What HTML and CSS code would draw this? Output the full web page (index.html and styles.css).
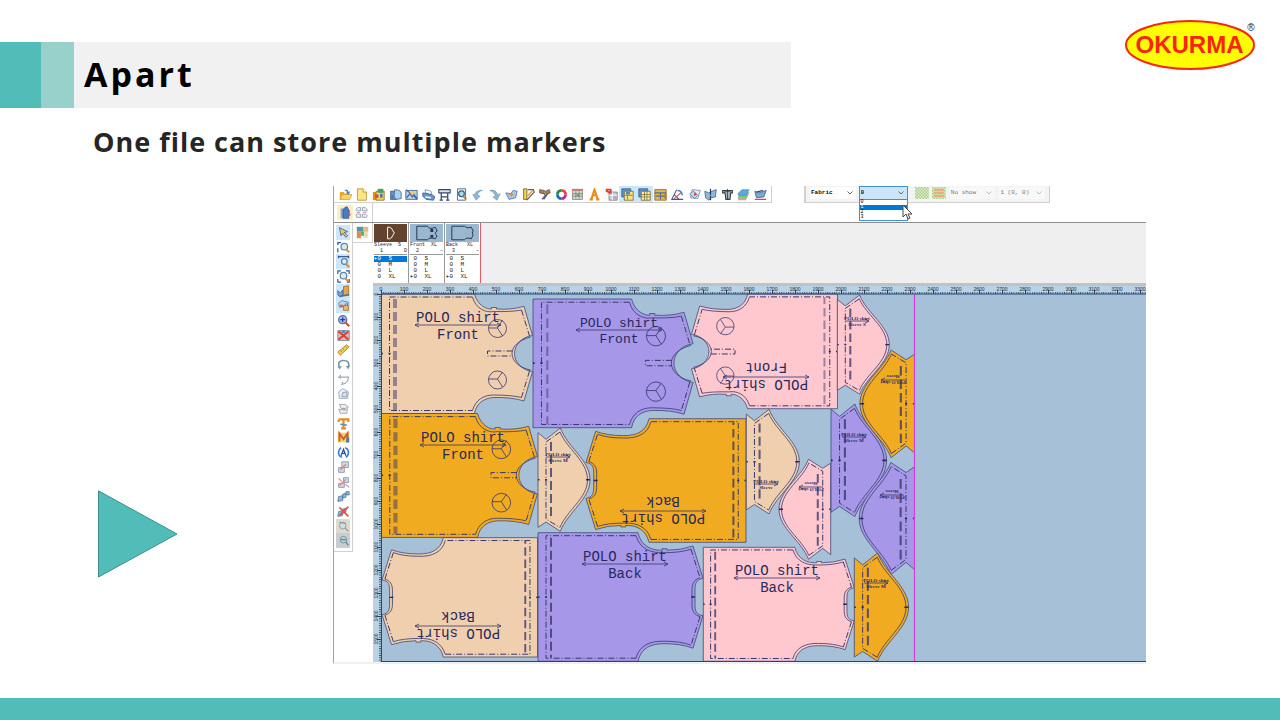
FILE: index.html
```html
<!DOCTYPE html>
<html lang="en">
<head>
<meta charset="utf-8">
<title>Apart</title>
<link rel="stylesheet" href="styles.css">
</head>
<body>
<header class="top">
  <div class="band">
    <span class="band-dark"></span><span class="band-light"></span>
    <h1 class="title">Apart</h1>
  </div>
  <svg class="logo" viewBox="0 0 132 50" role="img" aria-label="OKURMA">
    <ellipse cx="66" cy="25" rx="64" ry="24" fill="#ffff00" stroke="#fb2410" stroke-width="2"/>
    <text x="65.500" y="33" class="logo-name">OKURMA</text>
    <text x="127" y="11" class="logo-mark">®</text>
  </svg>
</header>
<h2 class="subtitle">One file can store multiple markers</h2>
<main class="content">
  <svg class="play" viewBox="0 0 80 88" aria-hidden="true"><path d="M.5 .8L79 44L.5 87Z" fill="#52bdb8" stroke="#3c8f8d"/></svg>
  <section class="app">
    <div class="bars">
      <div class="toolbar main-tools">
        <button aria-label="Open"><svg viewBox="0 0 16 16"><path d="M1 5h5l1 2h6v7H1z" fill="#e8a72e"/><path d="M1 14l3-6h12l-3 6z" fill="#ffd75c" stroke="#c98b20" stroke-width=".7"/><path d="M6 4q4-5 6 1l2-1-2 4-4-2 2-.5q-1-3-4-1.500" fill="#3f86cf"/></svg></button>
        <button aria-label="New"><svg viewBox="0 0 16 16"><path d="M3 1h7l4 4v10H3z" fill="#ffe680" stroke="#b28d38"/><path d="M10 1v4h4" fill="#fff" stroke="#b28d38"/></svg></button>
        <button aria-label="Open picture"><svg viewBox="0 0 16 16"><path d="M1 5h7v10H1z" fill="#d99622"/><path d="M5 4h10v11H5z" fill="#ffd24d" stroke="#7a6b34"/><path d="M7 1h7v5H7z" fill="#469e69"/><path d="M4 8h4v4H4z" fill="#d84b35"/><path d="M10 7h3v5h-3z" fill="#4175bd"/></svg></button>
        <button aria-label="Save"><svg viewBox="0 0 16 16"><path d="M2 4h7v10H2z" fill="#7393bd" stroke="#345581"/><path d="M7 2l6 1 2 3v7l-6 1-3-3z" fill="#a9d0ee" stroke="#3b6395"/><path d="M3 8l5 3-5 3z" fill="#487acb"/></svg></button>
        <button aria-label="Import"><svg viewBox="0 0 16 16"><path d="M1 3h14v11H1z" fill="#b7d4ea" stroke="#355e91"/><path d="M4 5h8v5H4z" fill="#f4c96a"/><path d="M2 12l4-5 3 4 2-3 4 5M1 2l5 4M15 14l-4-4" stroke="#356ac0" stroke-width="1.500" fill="none"/></svg></button>
        <button aria-label="Print"><svg viewBox="0 0 16 16"><path d="M4 2l7 2 1 5-8-3z" fill="#fff" stroke="#6887ae"/><path d="M1 6l11 2 4 3-2 4-9-1-4-4z" fill="#6297cb" stroke="#365b91"/><path d="M4 11l7 1" stroke="#fff" stroke-width="2"/></svg></button>
        <button aria-label="Plot"><svg viewBox="0 0 16 16"><path d="M1 2h14v4H1z" fill="#d9e7f4" stroke="#33466f" stroke-width="1.300"/><path d="M4 6v9M12 6v9M2 15h4M10 15h4M4 11h8" stroke="#33466f" stroke-width="1.500"/></svg></button>
        <button aria-label="Preview"><svg viewBox="0 0 16 16"><path d="M3 1h10v14H3z" fill="#f7f9fc" stroke="#36527b"/><circle cx="8" cy="7" r="3.500" fill="#a9dced" stroke="#345c8a" stroke-width="1.500"/><path d="M10 10l4 4" stroke="#b77f2c" stroke-width="2"/></svg></button>
        <button aria-label="Undo"><svg viewBox="0 0 16 16"><path d="M3 8q3-6 10-5-6 1-6 6l3 1-5 5-4-7z" fill="#8fb5da" stroke="#6088b5" stroke-width=".6"/></svg></button>
        <button aria-label="Redo"><svg viewBox="0 0 16 16"><path d="M2 3q7-2 10 5l3-1-4 8-5-4 3-1Q8 5 2 3z" fill="#8fb5c9" stroke="#5d93a7" stroke-width=".6"/></svg></button>
        <button aria-label="Piece"><svg viewBox="0 0 16 16"><path d="M1 6l6 1 3-4 5 1-2 8-8 2z" fill="#a8c7eb" stroke="#4773af"/><path d="M8 5l1 2 3 1-3 1-1 3-1-3-3-1 3-1z" fill="#ed8b2b"/></svg></button>
        <button aria-label="Measure"><svg viewBox="0 0 16 16"><path d="M2 1h4v13H2z" fill="#f8d551" stroke="#665229"/><path d="M7 2h7l1 3L6 15" fill="none" stroke="#695a5a" stroke-width="1.500"/><path d="M7 10l6-7" stroke="#e6a53b" stroke-width="2"/></svg></button>
        <button aria-label="Tools"><svg viewBox="0 0 16 16"><path d="M2 2l6 1-1 4-5-1zM9 4l5-2 1 4-5 2z" fill="#bd792f" stroke="#60584d"/><path d="M7 6l2 3-4 5M12 7l-5 7" stroke="#555e71" stroke-width="1.500" fill="none"/></svg></button>
        <button aria-label="Colors"><svg viewBox="0 0 16 16" fill="none" stroke-width="3.500"><path d="M8 3a5 5 0 0 1 5 5" stroke="#e7472d"/><path d="M13 8a5 5 0 0 1-5 5" stroke="#ba2ca1"/><path d="M8 13a5 5 0 0 1-5-5" stroke="#176eb2"/><path d="M3 8a5 5 0 0 1 5-5" stroke="#248b39"/></svg></button>
        <button aria-label="Table"><svg viewBox="0 0 16 16"><path d="M2 3h12v11H2z" fill="#d9e1cf" stroke="#777"/><path d="M2 7h12M2 10h12M6 4v9M10 4v9" stroke="#777"/><path d="M1 2h14" stroke="#e57265" stroke-width="2"/><path d="M7 8h3v2H7z" fill="#549957"/></svg></button>
        <button aria-label="Text"><svg viewBox="0 0 16 16"><path d="M2 14h4M10 14h4M4 14l4-12 4 12M5.500 9h5" fill="none" stroke="#ed8a16" stroke-width="2.500"/></svg></button>
        <button aria-label="Export table"><svg viewBox="0 0 16 16"><path d="M5 5h10v10H5z" fill="#bcd2dd" stroke="#777"/><path d="M5 9h10M9 5v10" stroke="#fff"/><path d="M1 2h6v5M1 3l5 3" stroke="#d94331" stroke-width="2.300" fill="none"/><path d="M10 10h4v4h-4z" fill="#c99bc8"/></svg></button>
        <button class="on" aria-label="Marker list" aria-pressed="true"><svg viewBox="0 0 16 16"><path d="M1 1h11v10H1z" fill="#6093cd" stroke="#325a8d"/><path d="M4 4h11v11H4z" fill="#ffe27b" stroke="#75663d"/><path d="M5 9h9M8 9v5" stroke="#7f703c"/><path d="M6 5h5v3H6z" fill="#4a87bc"/></svg></button>
        <button class="on" aria-label="Piece list" aria-pressed="true"><svg viewBox="0 0 16 16"><path d="M1 1h11v10H1z" fill="#6093cd" stroke="#325a8d"/><path d="M4 4h11v11H4z" fill="#fff0a3" stroke="#75663d"/><path d="M4 8h11M4 11h11M8 4v11M11 4v11" stroke="#87753c"/></svg></button>
        <button aria-label="Panels"><svg viewBox="0 0 16 16"><path d="M1 2h14v13H1z" fill="#eab648" stroke="#846629"/><path d="M1 6h14M8 6v8M2 10h12" stroke="#4d6f96" stroke-width="1.500"/><path d="M10 10l5-4v8z" fill="#b97b2c"/></svg></button>
        <button aria-label="Angle"><svg viewBox="0 0 16 16" fill="none"><path d="M7 2L1 14h14M4 8l6 6" stroke="#385a92" stroke-width="1.300"/><path d="M4 13L13 5" stroke="#d14d50" stroke-width="1.300"/><path d="M8 3q5 0 6 6" stroke="#4c84b8" stroke-width="1.800"/></svg></button>
        <button aria-label="Flip"><svg viewBox="0 0 16 16"><path d="M5 2l10 1-3 10-9-1z" fill="#e9edf5" stroke="#7782a4"/><path d="M2 7l5-3 5 5-4 4z" fill="#cbdcf0" stroke="#5277ab"/><path d="M8 5l3 3-4 2z" fill="#d64242"/></svg></button>
        <button aria-label="Mirror"><svg viewBox="0 0 16 16"><path d="M1 4l5 2 4-2 5-2-1 9-5 1-3 3-4-3z" fill="#8db8df" stroke="#3a669a"/><path d="M8 1v14" stroke="#273b59" stroke-width="1.500"/><path d="M4 9h8" stroke="#dfb34c"/></svg></button>
        <button aria-label="Delete piece"><svg viewBox="0 0 16 16"><path d="M2 3h12v3h-2l-1 8H6L5 6H2z" fill="#a9b6bd" stroke="#343e49" stroke-width="1.300"/><path d="M8 1v13M4 4h8" stroke="#343e49"/></svg></button>
        <button aria-label="Layers"><svg viewBox="0 0 16 16"><path d="M1 13l5-6h9l-4 8H2z" fill="#f290b2"/><path d="M1 10l5-5h9l-4 8H2z" fill="#75d16f"/><path d="M1 7l5-5h9l-4 7H2z" fill="#5ba6e7" stroke="#327bbd" stroke-width=".6"/></svg></button>
        <button aria-label="Cut"><svg viewBox="0 0 16 16"><path d="M1 4l5 2 9-3-3 8-9 1z" fill="#7aa9d1" stroke="#3b658c"/><path d="M3 5l8-2" stroke="#35516f" stroke-width="1.500"/><path d="M1 14h14" stroke="#ed3f3f" stroke-width="1.500"/></svg></button>
      </div>
      <div class="toolbar fabric-tools">
        <span class="pick pick-a"><select aria-label="Fabric"><option>Fabric</option></select><svg viewBox="0 0 6 4"><path d="M.5 .5L3 3L5.500 .5"/></svg></span>
        <span class="pick pick-b open"><select aria-label="Marker"><option>0</option></select><svg viewBox="0 0 6 4"><path d="M.5 .5L3 3L5.500 .5"/></svg>
          <span class="menu"><span>0</span><span class="sel">1</span><span>2</span><span>3</span>
            <svg class="cursor" viewBox="0 0 10 16"><path d="M1 1v12l3-3 2 5 2-1-2-4h4z" fill="#fff" stroke="#444"/></svg></span>
        </span>
        <svg class="swatch" viewBox="0 0 14 12"><rect width="14" height="12" fill="url(#greenCheck)"/></svg>
        <svg class="swatch" viewBox="0 0 14 12"><rect width="14" height="12" fill="url(#greenCheck)"/><path d="M2 3h10M2 6h10M2 9h10" stroke="#f2a16f" stroke-width="1.500"/></svg>
        <span class="pick pick-c off"><select aria-label="Show" disabled><option>No show</option></select><svg viewBox="0 0 6 4"><path d="M.5 .5L3 3L5.500 .5"/></svg></span>
        <span class="pick pick-d off"><select aria-label="Offset" disabled><option>1 (0, 0)</option></select><svg viewBox="0 0 6 4"><path d="M.5 .5L3 3L5.500 .5"/></svg></span>
      </div>
    </div>
    <div class="subbar">
      <div class="toolbar group-tools">
        <button class="warm" aria-label="Body"><svg viewBox="0 0 16 16"><path d="M2 3h5v12H2z" fill="#80a9d0"/><path d="M7 2l3-1 2 4v10H5V5z" fill="#437fc3" stroke="#2c5b98"/><path d="M13 5v6M12 10l1 2 2-2" stroke="#dc4d3e" fill="none"/></svg></button>
        <button aria-label="Group"><svg viewBox="0 0 16 16" fill="#e8edf2" stroke="#8798ab"><path d="M1 5q1-4 6-3v4H2zM9 2q5-1 6 3v1H9zM1 11q1-2 6-1v4H2zM9 10q5-1 6 2l-1 2H9z"/><path d="M2 8h4M10 8h4" stroke="#e28080"/></svg></button>
      </div>
    </div>
    <div class="body">
      <div class="side">
        <div class="tools">
          <button class="on" aria-label="Select"><svg viewBox="0 0 16 16"><path d="M3 2l2 10 2-3 4 5 2-2-4-4 4-1z" fill="#f6c652" stroke="#31568a"/></svg></button>
          <button aria-label="Zoom area"><svg viewBox="0 0 16 16"><path d="M1 5V2h4M1 9v5" stroke="#355b95" stroke-width="1.500" fill="none"/><circle cx="9" cy="7" r="4" fill="#d7edf4" stroke="#5d83ab" stroke-width="1.500"/><path d="M11 10l4 4" stroke="#d58a45" stroke-width="2.500"/></svg></button>
          <button class="on" aria-label="Zoom width"><svg viewBox="0 0 16 16"><path d="M1 2h14M2 1v3M14 1v3" stroke="#355b95" stroke-width="1.500"/><circle cx="9" cy="8" r="3.500" fill="#d7edf4" stroke="#5d83ab" stroke-width="1.500"/><path d="M11 11l4 4" stroke="#d58a45" stroke-width="2.500"/></svg></button>
          <button aria-label="Zoom all"><svg viewBox="0 0 16 16"><path d="M1 5V1h4M11 1h4v4M1 11v4h4M15 11v4h-3" stroke="#355b95" stroke-width="1.500" fill="none"/><circle cx="8" cy="7" r="4" fill="#d7edf4" stroke="#5d83ab" stroke-width="1.500"/><path d="M10 10l4 4" stroke="#d58a45" stroke-width="2.500"/></svg></button>
          <button class="on" aria-label="Hold"><svg viewBox="0 0 16 16"><path d="M1 7l3 3 3-4v7q-4 3-6-1z" fill="#78a9df" stroke="#365f96"/><path d="M8 2l6-1v11l-6 1z" fill="#eea34b" stroke="#a76928"/><path d="M3 14l12-2" stroke="#4472ab" stroke-width="2"/></svg></button>
          <button class="on" aria-label="Lock"><svg viewBox="0 0 16 16"><path d="M2 5l4-3 8 2-1 5-10 1z" fill="#bdd8ee" stroke="#4e7cae"/><path d="M4 7h3v3H4z" fill="#e04b3e"/><path d="M8 8h6v6H8z" fill="#e9b765" stroke="#a0762d"/><path d="M10 8V6h3v2" fill="none" stroke="#5d77a0"/></svg></button>
          <button aria-label="Zoom in"><svg viewBox="0 0 16 16"><circle cx="7" cy="7" r="5" fill="#a9bde8" stroke="#5066a6" stroke-width="1.500"/><path d="M4 7h6M7 4v6" stroke="#273c92" stroke-width="1.500"/><path d="M10 10l5 5" stroke="#ba503d" stroke-width="2.500"/></svg></button>
          <button aria-label="Remove"><svg viewBox="0 0 16 16"><path d="M1 2h14v12H1z" fill="#dac3bd" stroke="#697894"/><path d="M2 3l12 10M14 3L2 13" stroke="#e63b26" stroke-width="2.500"/><path d="M6 2h4v3H6z" fill="#5189bd"/></svg></button>
          <button aria-label="Ruler"><svg viewBox="0 0 16 16"><path d="M1 11L12 2l3 3L4 15z" fill="#f3cf4e" stroke="#a77b22"/><path d="M4 9l2 2M7 7l2 2M10 4l2 2" stroke="#a77b22"/></svg></button>
          <button aria-label="Rotate"><svg viewBox="0 0 16 16"><path d="M3 12Q0 3 8 3t6 8" fill="none" stroke="#719aa2" stroke-width="2"/><path d="M1 10l2 4 3-4M11 10l3 4 2-5" fill="#719aa2"/></svg></button>
          <button class="dim" aria-label="Split"><svg viewBox="0 0 16 16"><path d="M1 5h14M4 2v5M14 5q0 8-8 9l1-3" fill="none" stroke="#8295ab" stroke-width="1.400"/></svg></button>
          <button class="dim" aria-label="Copy piece"><svg viewBox="0 0 16 16"><path d="M2 6l5-4 7 4-1 8H3z" fill="#e7edf2" stroke="#7588a1"/><path d="M7 7l5-1v6H6z" fill="#d4dbe4" stroke="#627a9a"/></svg></button>
          <button class="dim" aria-label="Paste piece"><svg viewBox="0 0 16 16"><path d="M3 3h7l4 3-4 2H5zM2 9l8 1 3-2-1 6H4z" fill="#e4e7ec" stroke="#798999"/><path d="M7 8l3 1" stroke="#cb7272" stroke-width="2"/></svg></button>
          <button aria-label="Text tool"><svg viewBox="0 0 16 16"><path d="M2 3h12v3M2 3v3M8 3v11M5 14h6" fill="none" stroke="#e68a26" stroke-width="2.700"/><path d="M4 9l8 1" stroke="#5098b8" stroke-width="2"/></svg></button>
          <button aria-label="Mark tool"><svg viewBox="0 0 16 16"><path d="M1 2h14v12H1z" fill="#ffd45d"/><path d="M3 13V3l5 7 5-7v10" fill="none" stroke="#ca6137" stroke-width="2.500"/><path d="M12 8h3v6h-4z" fill="#477caa"/></svg></button>
          <button aria-label="Turn"><svg viewBox="0 0 16 16"><path d="M5 2Q0 6 3 12l3 2M11 14q5-4 2-10l-3-2" fill="none" stroke="#367bd3" stroke-width="2"/><path d="M5 12l3-8 3 8M6 9h4" stroke="#274d99" stroke-width="1.500" fill="none"/></svg></button>
          <button class="dim" aria-label="Join"><svg viewBox="0 0 16 16"><path d="M6 1h8v7H6zM2 8h7v6H2z" fill="#c9d1df" stroke="#61789e"/><path d="M4 11l7-7" stroke="#d86d60" stroke-width="2"/></svg></button>
          <button class="dim" aria-label="Unjoin"><svg viewBox="0 0 16 16"><path d="M8 2h6v6H8zM2 9h7v5H2z" fill="#c9d1df" stroke="#61789e"/><path d="M2 3l4 4M10 10l5 4M3 12l8-8" stroke="#d86d60" stroke-width="1.500"/></svg></button>
          <button aria-label="Link"><svg viewBox="0 0 16 16"><path d="M2 8l5-1v6l-6 1zM7 5l4-1v5l-4 1zM11 2h4v4h-4z" fill="#8fb8d2" stroke="#527a9e"/></svg></button>
          <button aria-label="Unlink"><svg viewBox="0 0 16 16"><path d="M2 8l5-1v6l-6 1zM7 5l4-1v5l-4 1z" fill="#8fb8d2" stroke="#527a9e"/><path d="M3 3l11 11M14 2L3 13" stroke="#e64c49" stroke-width="2"/></svg></button>
          <button class="sand" aria-label="Find"><svg viewBox="0 0 16 16"><circle cx="7" cy="7" r="4" fill="#d5dce2" stroke="#8796a2"/><path d="M10 10l4 4M3 3l8 1" stroke="#8796a2" stroke-width="1.500"/></svg></button>
          <button class="gray" aria-label="Inspect"><svg viewBox="0 0 16 16"><circle cx="8" cy="7" r="4" fill="#b9d5d7" stroke="#69838c"/><path d="M11 10l3 4M5 7h6" stroke="#69838c" stroke-width="1.500"/></svg></button>
        </div>
        <div class="tools palette">
          <button aria-label="Palette"><svg viewBox="0 0 16 16"><path d="M1 1h14v14H1z" fill="#efeadd"/><path d="M1 1h8v6H1z" fill="#4b9ba6"/><path d="M9 1h6v6H9z" fill="#e8b878"/><path d="M1 7h5v8H1z" fill="#e08a54"/><path d="M6 7h4v5H6z" fill="#66af5e"/><path d="M11 8h3v6h-3z" fill="#e9d9a0"/></svg></button>
        </div>
      </div>
      <div class="work">
        <div class="pieces">
          <article class="piece">
            <svg class="thumb brown" viewBox="0 0 34 18"><path d="M14 3h2q3 1 3 3l2 3-2 3q0 2-3 3h-2z" fill="none" stroke="#fff"/></svg>
            <div class="name"><span>Sleeve</span><span class="size">S</span><span>&nbsp; 1</span><span>D</span></div>
            <ul><li class="sel">▸0&nbsp; S</li><li>&nbsp;0&nbsp; M</li><li>&nbsp;0&nbsp; L</li><li>&nbsp;0&nbsp; XL</li></ul>
          </article>
          <article class="piece">
            <svg class="thumb" viewBox="0 0 34 18"><path d="M7 2h11q2 4 8 1l2 4q-4 2 0 5l-2 3q-6-2-8 1H7z" fill="none" stroke="#26374a"/><path d="M21 5h3v3h-3zM21 11h3v3h-3z" fill="#26374a"/></svg>
            <div class="name"><span>Front</span><span class="size">XL</span><span>&nbsp; 2</span><span>–</span></div>
            <ul><li>&nbsp;0&nbsp; S</li><li>&nbsp;0&nbsp; M</li><li>&nbsp;0&nbsp; L</li><li>▸0&nbsp; XL</li></ul>
          </article>
          <article class="piece">
            <svg class="thumb" viewBox="0 0 34 18"><path d="M6 2h13q3 3 7 1l2 4q-2 2 0 4l-2 4q-5-2-7 1H6z" fill="none" stroke="#26374a"/></svg>
            <div class="name"><span>Back</span><span class="size">XL</span><span>&nbsp; 3</span><span>–</span></div>
            <ul><li>&nbsp;0&nbsp; S</li><li>&nbsp;0&nbsp; M</li><li>&nbsp;0&nbsp; L</li><li>▸0&nbsp; XL</li></ul>
          </article>
        </div>
        <svg class="canvas" viewBox="373 286 773 376">
          <defs>
            <pattern id="greenCheck" width="3" height="3" patternUnits="userSpaceOnUse"><rect width="3" height="3" fill="#f3efb4"/><path d="M0 0h1.500v1.500H0zM1.500 1.500H3V3H1.500z" fill="#93cda0"/></pattern>
            <pattern id="tickX" x="381" y="286" width="2.300" height="8" patternUnits="userSpaceOnUse"><path d="M.5 6v2" stroke="#405567" stroke-width=".9"/></pattern>
            <pattern id="tickY" x="373" y="294" width="8" height="2.300" patternUnits="userSpaceOnUse"><path d="M6 .5h2" stroke="#405567" stroke-width=".9"/></pattern>
            <g id="frontPiece">
              <path class="cut" d="M0 0H93C96 12 106 15.500 110 15V13.500H115V15Q130 16 142.500 12.300L151 41.500C140 43 133 51 133 59.500S140 76 151 77.500L142.500 107Q130 103 112 103.500C104 104 95 108 93 119.500H0Z"/>
              <path class="line" d="M91 3C94 15 105 19 112 17.500Q130 18 140 16M149 43C138 46 130.500 52 130.500 59.500S138 74 149 76M140 103.500Q130 101 112 101C102 101 94 106 91 116.500"/>
              <path class="seam" d="M91 3H8V116.500H91"/>
              <path class="seam" d="M140 16L148 42M148 77L140 103.500"/>
              <path class="hem" d="M13.500 5V116"/>
              <path class="seam" d="M131 57H106V62H131"/>
              <g class="line"><circle cx="116" cy="34.500" r="9"/><path d="M107 34H116L121 26M116 34L121 42"/><circle cx="116" cy="86" r="9"/><path d="M107 85H116L121 78M116 85L121 93"/></g>
              <path class="notch" d="M0 59.500H1.500M7 59.500H9"/>
            </g>
            <g id="backPiece">
              <path class="cut" d="M0 0H100C103 13 113 18 124 17.500V16H129V17.500Q143 17.500 155 13.300L165 45.600C158 47 157 51 157 57V72C157 78 158 82 165 83L155 115.500Q143 111 126 111C113 111 103 115 100 128.600H0Z"/>
              <path class="line" d="M98 3C102 16 112 20.500 126 20Q143 20 153 16.500M162 45C156 47 154 51 154 57V72C154 78 156 82 162 84M153 112.500Q143 108.500 126 108.500C112 108 101 113 98 125.500"/>
              <path class="seam" d="M98 3H8V125.500H98"/>
              <path class="seam" d="M153 16.500L162 45M162 84L153 112.500"/>
              <path class="hem thin" d="M13 5V125"/>
              <path class="notch" d="M0 64.300H1.500M7 64.300H9M153 64.300H157"/>
            </g>
            <g id="sleevePiece">
              <path class="cut" d="M0 4.700L8 11.300L22.300 0C30 20 52 32 52 51.700S30 84 22.300 103.300L8 94L0 99.300Z"/>
              <path class="line" d="M22 4C29 21 49.500 33 49.500 51.700S29 82 22 99.500"/>
              <path class="seam" d="M22 4L8 14V91L22 99.500"/>
              <path class="hem thin" d="M13 14V91"/>
              <path class="notch" d="M0 51.700H1.500M7 51.700H9M48 51.700H52"/>
            </g>
            <path id="grain" class="line" d="M-43 0H43M-39-2L-43 0L-39 2M39-2L43 0L39 2"/>
            <path id="shortGrain" class="line" d="M-12 0H12M8-2L12 0L8 2"/>
          </defs>
          <rect x="373" y="286" width="773" height="376" fill="#b9d2e4"/>
          <rect x="381" y="294" width="765" height="368" fill="#a6c0d8"/>
          <rect x="381" y="286" width="765" height="8" fill="url(#tickX)"/>
          <rect x="373" y="294" width="8" height="368" fill="url(#tickY)"/>
          <g id="rulerX" class="ruler"></g>
          <g id="rulerY" class="ruler"></g>

          <g class="peach"><use href="#frontPiece" transform="translate(381.500 294)"/></g>
          <g class="violet narrow"><use href="#frontPiece" transform="translate(533 299) scale(1.060 1.077)"/></g>
          <g class="pink narrow"><use href="#frontPiece" transform="translate(837.500 408.700) scale(-.967 -.960)"/></g>
          <g class="amber"><use href="#frontPiece" transform="translate(381.500 413.500) scale(1.033 1.037)"/></g>
          <g class="peach"><use href="#backPiece" transform="translate(537.500 657) scale(-.942 -.928)"/></g>
          <g class="amber"><use href="#backPiece" transform="translate(746 542.300) scale(-.970 -.961)"/></g>
          <g class="violet"><use href="#backPiece" transform="translate(538 532.700)"/></g>
          <g class="pink"><use href="#backPiece" transform="translate(703.300 547.300) scale(.915 .886)"/></g>
          <g class="peach"><use href="#sleevePiece" transform="translate(538 428)"/></g>
          <g class="pink"><use href="#sleevePiece" transform="translate(837.300 295) scale(1 .960)"/></g>
          <g class="peach"><use href="#sleevePiece" transform="translate(746.300 409.300) scale(1.020 1.013)"/></g>
          <g class="pink"><use href="#sleevePiece" transform="translate(830.700 559.300) scale(-.994 -.968)"/></g>
          <g class="violet"><use href="#sleevePiece" transform="translate(831 404) scale(1.070 1.090)"/></g>
          <g class="amber"><use href="#sleevePiece" transform="translate(914.500 457.700) scale(-1.050 -1.042)"/></g>
          <g class="violet"><use href="#sleevePiece" transform="translate(914.500 574.700) scale(-1.064 -1.087)"/></g>
          <g class="amber"><use href="#sleevePiece" transform="translate(854.300 553) scale(1.044 1.048)"/></g>

          <g transform="translate(458 325)"><use href="#grain"/><text y="-3">POLO shirt</text><text y="14">Front</text></g>
          <g class="small" transform="translate(619 330)"><use href="#grain"/><text y="-3">POLO shirt</text><text y="13">Front</text></g>
          <g transform="translate(766 377) rotate(180)"><use href="#grain"/><text y="-3">POLO shirt</text><text y="14">Front</text></g>
          <g transform="translate(463 445)"><use href="#grain"/><text y="-3">POLO shirt</text><text y="14">Front</text></g>
          <g transform="translate(458 626) rotate(180)"><use href="#grain"/><text y="-3">POLO shirt</text><text y="14">Back</text></g>
          <g transform="translate(663 511) rotate(180)"><use href="#grain"/><text y="-3">POLO shirt</text><text y="14">Back</text></g>
          <g transform="translate(625 564)"><use href="#grain"/><text y="-3">POLO shirt</text><text y="14">Back</text></g>
          <g transform="translate(777 578)"><use href="#grain"/><text y="-3">POLO shirt</text><text y="14">Back</text></g>
          <g class="tiny" transform="translate(558 457)"><use href="#shortGrain"/><text y="-1">POLO shirt</text><text y="5">Sleeve M</text></g>
          <g class="tiny" transform="translate(857 321)"><use href="#shortGrain"/><text y="-1">POLO shirt</text><text y="5">Sleeve S</text></g>
          <g class="tiny" transform="translate(766 484)"><use href="#shortGrain"/><text y="-1">POLO shirt</text><text y="5">Sleeve</text></g>
          <g class="tiny" transform="translate(854 437)"><use href="#shortGrain"/><text y="-1">POLO shirt</text><text y="5">Sleeve M</text></g>
          <g class="tiny" transform="translate(876 583)"><use href="#shortGrain"/><text y="-1">POLO shirt</text><text y="5">Sleeve M</text></g>
          <g class="tiny" transform="translate(893 380) rotate(180)"><use href="#shortGrain"/><text y="-1">POLO shirt</text><text y="5">Sleeve</text></g>
          <g class="tiny" transform="translate(811 487) rotate(180)"><use href="#shortGrain"/><text y="-1">POLO shirt</text><text y="5">Sleeve</text></g>
          <g class="tiny" transform="translate(892 495) rotate(180)"><use href="#shortGrain"/><text y="-1">POLO shirt</text><text y="5">Sleeve</text></g>
          <path d="M914.500 294V662" stroke="#d83be0" stroke-width="1.200"/>
          <path d="M381 661.500H1146M381.500 294V662M381 294H1146" stroke="#24477a" fill="none"/>
        </svg>
      </div>
    </div>
  </section>
</main>
<footer class="foot"></footer>
<script src="script.js"></script>
</body>
</html>
```
FILE: styles.css
```css
* { box-sizing: border-box; }
body { margin: 0; min-height: 100vh; display: flex; flex-direction: column; background: #fff; font-family: "Open Sans", "Noto Sans", sans-serif; }
.top { display: flex; justify-content: space-between; align-items: flex-start; padding: 20px 24px 0 0; }
.band { display: flex; width: 63%; height: 66px; margin-top: 22px; background: #f1f1f1; }
.band-dark { width: 41px; background: #52bdb8; }
.band-light { width: 33px; background: #98d1cc; }
.title { margin: 0 0 0 10px; font-size: 34px; line-height: 64px; letter-spacing: 3px; color: #000; }
.logo { width: 132px; height: 50px; }
.logo-name { font: bold 24px "Liberation Sans", sans-serif; fill: #fb2410; text-anchor: middle; }
.logo-mark { font: 10px "Liberation Sans", sans-serif; fill: #222; text-anchor: middle; }
.subtitle { margin: 14px 0 24px 93px; font-size: 27px; line-height: 40px; letter-spacing: 1px; color: #262626; }
.content { flex: 1; display: grid; grid-template-columns: 333px 1fr; align-items: start; padding-right: 134px; }
.play { width: 80px; margin: 304px 0 0 98px; }
.foot { height: 22px; background: #52bdb8; }

.app { border-left: 1px solid #a3a3a3; border-bottom: 2px solid #eef1f3; background: #fff; font-family: "Liberation Mono", monospace; }
button { display: flex; flex: 1; align-items: center; justify-content: center; min-width: 0; padding: 0; border: 0; background: none; }
button svg { width: 13px; height: 13px; }
.on { background: #cce6fb; }
.warm { background: #fdecc4; }
.dim svg { opacity: .8; }
.sand { background: #dedace; }
.gray { background: #c9ccd0; }

.bars { display: flex; gap: 32px; height: 17px; }
.toolbar { display: flex; border: solid #d0d0d0; border-width: 0 1px 1px 0; }
.main-tools { width: 438px; padding: 0 2px 0 3px; }
.fabric-tools { width: 246px; align-items: center; padding: 0 4px 3px 4px; border-left: 2px solid #d0d0d0; background: #f3f3f3; }
.pick { position: relative; display: flex; align-items: center; height: 12px; background: #fff; }
.pick select { appearance: none; width: 100%; height: 12px; margin: 0; padding: 0 1px; border: 0; background: none; color: #111; opacity: 1; font: bold 6px "Liberation Mono", monospace; }
.pick > svg { position: absolute; right: 3px; width: 6px; height: 4px; fill: none; stroke: #666; }
.pick-a { width: 46px; margin-right: 4px; }
.pick-b { width: 48px; margin-right: 8px; }
.pick-c { width: 46px; margin-left: 1px; margin-right: 4px; }
.pick-d { width: 46px; }
.open { background: #cce4f7; outline: 1px solid #3c8fd8; }
.off { background: #f8f8f8; }
.off select { color: #777; font-weight: normal; }
.off > svg { stroke: #bbb; }
.swatch { width: 14px; height: 12px; margin-right: 3px; }
.menu { position: absolute; z-index: 2; top: 12px; left: -1px; right: -1px; border: 1px solid #3c8fd8; background: #fff; font-size: 5px; line-height: 5px; }
.menu span { display: block; padding-left: 1px; }
.menu .sel { background: #0078d7; color: #fff; }
.cursor { position: absolute; top: 4px; right: -5px; width: 10px; height: 16px; }

.subbar { height: 20px; border-bottom: 1px solid #8e8e8e; }
.group-tools { width: 39px; height: 19px; padding: 2px 3px; border-bottom: 0; }
.body { display: grid; grid-template-columns: 39px 1fr; }
.side { display: flex; align-items: flex-start; }
.tools { display: flex; flex-direction: column; width: 19px; height: 329px; padding: 2px 2px 3px; border: solid #cfcfcf; border-width: 0 1px 1px 0; }
.palette { width: 20px; height: 20px; }
.pieces { display: flex; height: 63px; background: #efefef; border-bottom: 3px solid #bfc3c6; }
.piece { width: 36px; padding: 1px 1px 0; border-right: 1px solid #999; background: #fff; color: #222; font-size: 6px; line-height: 6px; }
.piece:last-child { border-color: #e05c68; }
.thumb { display: block; width: 100%; height: 18px; background: #9ab7d1; }
.brown { background: #63432e; }
.name { display: grid; grid-template-columns: 1fr auto; justify-items: start; height: 13px; border-bottom: 1px solid #999; font-size: 5px; }
.name span:last-child { justify-self: end; }
.size { padding-right: 6px; }
.piece ul { margin: 1px 0 0; padding: 0; list-style: none; }
.piece li { height: 6px; white-space: nowrap; }
.piece li.sel { background: #0078d7; color: #fff; }

.canvas { display: block; width: 100%; }
.canvas text { font-family: "Liberation Mono", monospace; font-size: 14px; fill: #28285c; text-anchor: middle; }
.canvas .small text { font-size: 13px; }
.canvas .tiny text { font: bold 5px "Liberation Serif", serif; }
.canvas .ruler text { font: 5px "Liberation Sans", sans-serif; fill: #1c2e40; }
.ruler path { stroke: #2b3d50; }
.cut { stroke: #3f4a78; stroke-width: .8; vector-effect: non-scaling-stroke; }
.line { fill: none; stroke: #39396c; stroke-width: .8; vector-effect: non-scaling-stroke; }
.seam { fill: none; stroke: #39396c; stroke-dasharray: 6 2 1 2; vector-effect: non-scaling-stroke; }
.hem { fill: none; stroke: #39396c; stroke-opacity: .5; stroke-width: var(--hem-width, 4); stroke-dasharray: 9 4; }
.hem.thin { stroke-opacity: .8; stroke-width: 2; }
.narrow { --hem-width: 2; }
.notch { stroke: #1e2a5a; stroke-width: 1.5; }
.peach { fill: #f0cfae; }
.violet { fill: #a697e8; }
.pink { fill: #ffc7ce; }
.amber { fill: #f1ab20; }
```
FILE: script.js
```js
const NS = "http://www.w3.org/2000/svg";
const STEP = 23;

function mark(group, label, transform, tick) {
  const text = document.createElementNS(NS, "text");
  text.textContent = label;
  text.setAttribute("transform", transform);
  const path = document.createElementNS(NS, "path");
  path.setAttribute("d", tick);
  group.append(text, path);
}

const rulerX = document.getElementById("rulerX");
for (let i = 0; i <= 33; i++) {
  const x = 381 + i * STEP;
  mark(rulerX, String(i * 100), `translate(${x} 290.5)`, `M${x + 0.5} 290v4`);
}
const rulerY = document.getElementById("rulerY");
for (let i = 0; i < 16; i++) {
  const y = 294 + i * STEP;
  mark(rulerY, String(i * 100), `translate(377.5 ${y}) rotate(-90)`, `M377 ${y + 0.5}h4`);
}
```
